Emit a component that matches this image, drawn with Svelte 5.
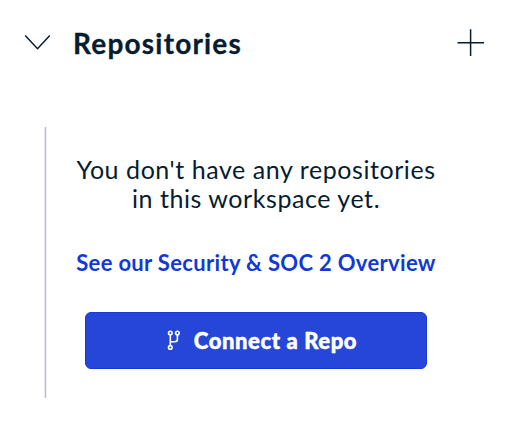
<script>
  let expanded = $state(true);
</script>

<section class="panel">
  <header>
    <button class="toggle" aria-label="Toggle repositories" onclick={() => (expanded = !expanded)}>
      <svg width="28" height="18" viewBox="0 0 28 18" fill="none" stroke="#061c30" stroke-width="1.5">
        <path d="M1.2 1.6 13.5 14.7 25.8 1.6" />
      </svg>
    </button>
    <h2>Repositories</h2>
    <button class="add" aria-label="Add repository">
      <svg width="28" height="28" viewBox="0 0 28 28" fill="none" stroke="#061c30" stroke-width="1.5">
        <path d="M.5 13.7H27M13.6.3V27" />
      </svg>
    </button>
  </header>

  {#if expanded}
    <div class="content">
      <p>You don't have any repositories<br />in this workspace yet.</p>
      <a href="#security">See our Security &amp; SOC 2 Overview</a>
      <button class="connect">
        <svg width="14" height="21" viewBox="0 0 14 21" fill="none" stroke="#fff" stroke-width="1.6">
          <circle cx="3.3" cy="3" r="1.8" />
          <circle cx="10.4" cy="3" r="1.8" />
          <circle cx="3.3" cy="17.4" r="1.8" />
          <path d="M3.3 4.9V15.5M10.4 4.9V9.2Q10.4 11.7 7.9 11.7H3.3" />
        </svg>
        <span>Connect a Repo</span>
      </button>
    </div>
  {/if}
</section>

<style>
  :global(body) {
    background: #fff;
  }
  .panel {
    box-sizing: border-box;
    width: 512px;
    height: 423px;
    overflow: hidden;
    color: #061c30;
    font-family: Lato, "Noto Sans", sans-serif;
  }
  header {
    display: flex;
    align-items: center;
    box-sizing: border-box;
    height: 86px;
    padding: 0 27px 0 24px;
  }
  button {
    padding: 0;
    border: 0;
    background: none;
    font: inherit;
  }
  svg {
    display: block;
    flex: none;
  }
  h2 {
    flex: 1;
    margin: 0 0 1px 21px;
    font-size: 28px;
    line-height: 36px;
    font-weight: 700;
    letter-spacing: 1.2px;
    -webkit-text-stroke: 0.3px currentColor;
    white-space: nowrap;
  }
  .content {
    display: flex;
    flex-direction: column;
    align-items: center;
    box-sizing: border-box;
    width: 421px;
    height: 271px;
    margin: 41px 0 0 45px;
    padding-top: 28px;
    border-left: 1px solid #bac0ca;
    box-shadow: -1px 0 #e6e9ee, inset 1px 0 #eef0f3;
  }
  p {
    width: 100%;
    margin: 0;
    font-size: 25px;
    line-height: 29px;
    letter-spacing: 0.56px;
    text-align: center;
    white-space: nowrap;
  }
  a {
    margin-top: 36px;
    color: #1139d8;
    font-size: 22px;
    line-height: 28px;
    font-weight: 700;
    letter-spacing: 0.33px;
    text-decoration: none;
    white-space: nowrap;
  }
  .connect {
    display: flex;
    align-items: center;
    justify-content: center;
    gap: 13px;
    box-sizing: border-box;
    width: 342px;
    height: 57px;
    margin-top: 35px;
    padding: 0 0 0 12px;
    border: 1px solid #1639d4;
    border-radius: 6px;
    background: #2546d8;
    color: #fff;
    font-size: 22px;
    font-weight: 900;
    letter-spacing: 0.6px;
    white-space: nowrap;
  }
  .connect span {
    -webkit-text-stroke: 0.5px currentColor;
  }
</style>
